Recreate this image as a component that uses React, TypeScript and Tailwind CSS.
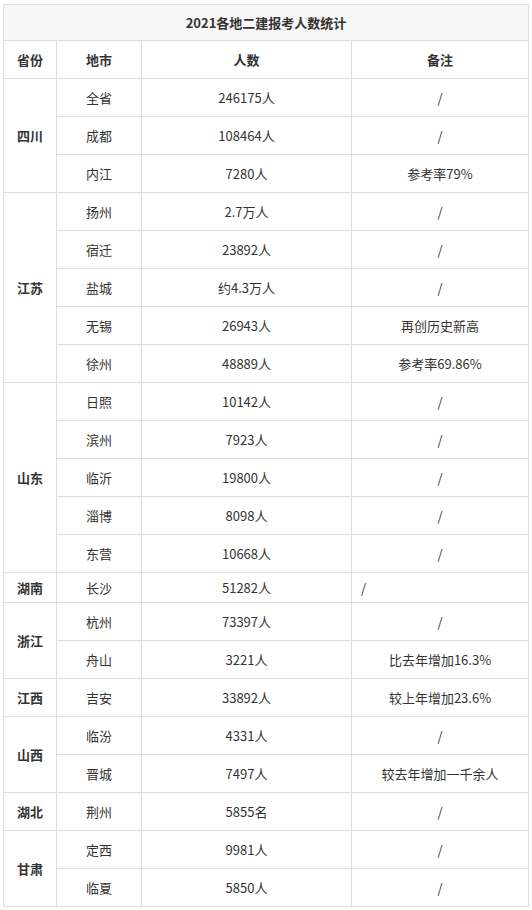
import React from "react";

type Row = { city: string; count: string; note: string; left?: boolean };
type Group = { province: string; rows: Row[] };

const groups: Group[] = [
  {
    province: "四川",
    rows: [
      { city: "全省", count: "246175人", note: "/" },
      { city: "成都", count: "108464人", note: "/" },
      { city: "内江", count: "7280人", note: "参考率79%" },
    ],
  },
  {
    province: "江苏",
    rows: [
      { city: "扬州", count: "2.7万人", note: "/" },
      { city: "宿迁", count: "23892人", note: "/" },
      { city: "盐城", count: "约4.3万人", note: "/" },
      { city: "无锡", count: "26943人", note: "再创历史新高" },
      { city: "徐州", count: "48889人", note: "参考率69.86%" },
    ],
  },
  {
    province: "山东",
    rows: [
      { city: "日照", count: "10142人", note: "/" },
      { city: "滨州", count: "7923人", note: "/" },
      { city: "临沂", count: "19800人", note: "/" },
      { city: "淄博", count: "8098人", note: "/" },
      { city: "东营", count: "10668人", note: "/" },
    ],
  },
  { province: "湖南", rows: [{ city: "长沙", count: "51282人", note: "/", left: true }] },
  {
    province: "浙江",
    rows: [
      { city: "杭州", count: "73397人", note: "/" },
      { city: "舟山", count: "3221人", note: "比去年增加16.3%" },
    ],
  },
  { province: "江西", rows: [{ city: "吉安", count: "33892人", note: "较上年增加23.6%" }] },
  {
    province: "山西",
    rows: [
      { city: "临汾", count: "4331人", note: "/" },
      { city: "晋城", count: "7497人", note: "较去年增加一千余人" },
    ],
  },
  { province: "湖北", rows: [{ city: "荆州", count: "5855名", note: "/" }] },
  {
    province: "甘肃",
    rows: [
      { city: "定西", count: "9981人", note: "/" },
      { city: "临夏", count: "5850人", note: "/" },
    ],
  },
];

const cell = "border border-[#dddddd] text-center align-middle p-0";

export default function App() {
  return (
    <div
      className="bg-white w-[532px] h-[910px] pt-[4px] pl-[3px] text-[13px] text-[#333333]"
      style={{ fontFamily: '"Noto Sans CJK SC", "Noto Sans", sans-serif' }}
    >
      <table className="border-collapse table-fixed w-[525px]">
        <colgroup>
          <col className="w-[53px]" />
          <col className="w-[85px]" />
          <col className="w-[210px]" />
          <col className="w-[177px]" />
        </colgroup>
        <tbody>
          <tr className="h-[36px]">
            <td colSpan={4} className={`${cell} bg-[#f7f7f7] font-bold`}>
              2021各地二建报考人数统计
            </td>
          </tr>
          <tr className="h-[38px] font-bold">
            <td className={cell}>省份</td>
            <td className={cell}>地市</td>
            <td className={cell}>人数</td>
            <td className={cell}>备注</td>
          </tr>
          {groups.map((g) =>
            g.rows.map((r, i) => (
              <tr key={g.province + r.city} className={r.left ? "h-[30px]" : "h-[38px]"}>
                {i === 0 && (
                  <td rowSpan={g.rows.length} className={`${cell} font-bold`}>
                    {g.province}
                  </td>
                )}
                <td className={cell}>{r.city}</td>
                <td className={cell}>{r.count}</td>
                <td className={r.left ? `${cell} text-left pl-[9px]` : cell}>{r.note}</td>
              </tr>
            ))
          )}
        </tbody>
      </table>
    </div>
  );
}
